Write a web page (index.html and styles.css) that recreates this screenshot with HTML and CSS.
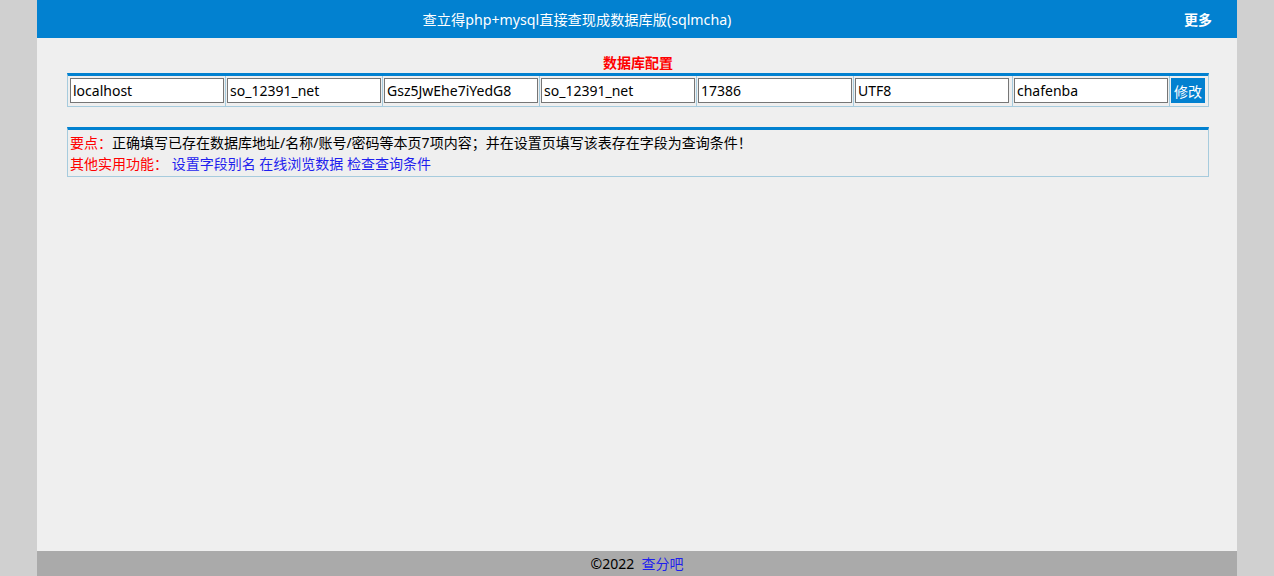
FILE: index.html
```html
<!DOCTYPE html>
<html lang="zh-CN">
<head>
<meta charset="utf-8">
<title>查立得php+mysql直接查现成数据库版(sqlmcha)</title>
<link rel="stylesheet" href="styles.css">
</head>
<body>
<div class="page">
  <header class="topbar">
    <div class="title">查立得php+mysql直接查现成数据库版(sqlmcha)</div>
    <a class="more" href="#">更多</a>
  </header>
  <main class="main">
    <div class="cfg-title">数据库配置</div>
    <form class="cfg">
      <div class="cell first"><input class="field" value="localhost"></div>
      <div class="cell"><input class="field" value="so_12391_net"></div>
      <div class="cell"><input class="field" value="Gsz5JwEhe7iYedG8"></div>
      <div class="cell"><input class="field" value="so_12391_net"></div>
      <div class="cell"><input class="field" value="17386"></div>
      <div class="cell wide"><input class="field" value="UTF8"></div>
      <div class="cell"><input class="field" value="chafenba"></div>
      <div class="cell last"><button type="button" class="btn">修改</button></div>
    </form>
    <div class="info">
      <div class="line"><span class="red">要点：</span>正确填写已存在数据库地址/名称/账号/密码等本页7项内容；并在设置页填写该表存在字段为查询条件！</div>
      <div class="line"><span class="red">其他实用功能：</span> <a href="#">设置字段别名</a> <a href="#">在线浏览数据</a> <a href="#">检查查询条件</a></div>
    </div>
  </main>
  <footer class="footer">©2022&nbsp; <a href="#">查分吧</a></footer>
</div>
</body>
</html>
```
FILE: styles.css
```css
html, body {
  margin: 0;
  padding: 0;
}
body {
  background: #d0d0d0;
  font-family: "Noto Sans", "Noto Sans CJK SC", sans-serif;
  font-size: 14px;
  color: #000;
}
.page {
  width: 1200px;
  margin: 0 auto;
  min-height: 100vh;
  background: #efefef;
  display: flex;
  flex-direction: column;
}
.topbar {
  height: 38px;
  background: #0281d0;
  color: #fff;
  display: flex;
  align-items: center;
}
.title {
  flex: 1;
  text-align: center;
  font-size: 14.2px;
}
.more {
  box-sizing: border-box;
  width: 120px;
  text-align: right;
  padding-right: 25px;
  color: #fff;
  font-weight: bold;
  text-decoration: none;
  font-size: 14px;
}
.main {
  padding: 15px 28px 0 30px;
}
.cfg-title {
  color: #f00;
  font-weight: bold;
  text-align: center;
  line-height: 20px;
  font-size: 14px;
}
.cfg {
  margin: 0;
  width: 1140px;
  border: 1px solid #a6cbdd;
  border-top: 3px solid #0281d0;
  display: flex;
  height: 30px;
}
.cell {
  border-left: 1px solid #a6cbdd;
  padding: 2px 1px;
  display: flex;
  align-items: flex-start;
}
.cell.first {
  border-left: 0;
  padding-left: 2px;
}
.cell.wide {
  padding-right: 3px;
}
.field {
  box-sizing: border-box;
  width: 154px;
  height: 25px;
  margin: 0;
  border: 1px solid #767676;
  background: #fff;
  font-family: "Noto Sans", "Noto Sans CJK SC", sans-serif;
  font-size: 14px;
  padding: 0 2px;
  color: #000;
}
.btn {
  width: 34px;
  height: 25px;
  margin: 0;
  border: 0;
  background: #0281d0;
  color: #fff;
  font-family: "Noto Sans", "Noto Sans CJK SC", sans-serif;
  font-size: 14px;
  padding: 0;
}
.info {
  margin-top: 20px;
  width: 1136px;
  border: 1px solid #a6cbdd;
  border-top: 3px solid #0281d0;
  padding: 2px 2px 2px 2px;
  line-height: 21px;
  font-size: 14px;
}
.red {
  color: #f00;
}
.info a, .footer a {
  color: #1f1fee;
  text-decoration: none;
}
.footer {
  margin-top: auto;
  height: 25px;
  line-height: 25px;
  background: #aaaaaa;
  text-align: center;
  font-size: 14px;
}
```
